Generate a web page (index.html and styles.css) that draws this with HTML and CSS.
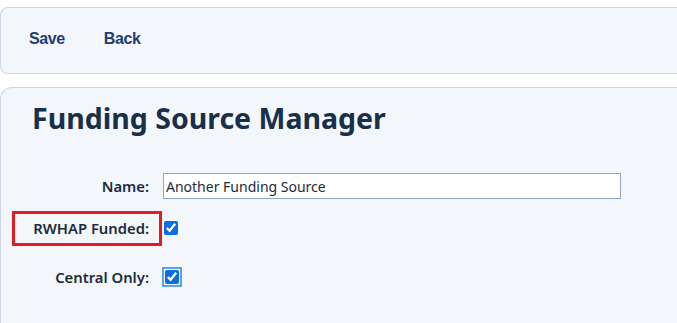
FILE: index.html
```html
<!DOCTYPE html>
<html lang="en">
<head>
    <meta charset="UTF-8">
    <title>Funding Source Manager</title>
    <link rel="stylesheet" href="styles.css">
</head>
<body>
    <div class="toolbar">
        <a class="tool-link" href="#">Save</a>
        <a class="tool-link" href="#">Back</a>
    </div>

    <div class="panel">
        <h1 class="title">Funding Source Manager</h1>

        <div class="form">
            <div class="form-row">
                <label class="form-label" for="name">Name:</label>
                <input class="text-input" type="text" id="name" value="Another Funding Source">
            </div>
            <div class="form-row">
                <label class="form-label highlight" for="rwhap">RWHAP Funded:</label>
                <input class="check" type="checkbox" id="rwhap" checked>
            </div>
            <div class="form-row last">
                <label class="form-label" for="central">Central Only:</label>
                <input class="check focused" type="checkbox" id="central" checked>
            </div>
        </div>
    </div>
</body>
</html>
```

FILE: styles.css
```css
* {
    margin: 0;
    padding: 0;
    box-sizing: border-box;
}

body {
    font-family: 'Noto Sans', 'Open Sans', sans-serif;
    background-color: #ffffff;
    overflow: hidden;
}

.toolbar {
    display: flex;
    align-items: center;
    gap: 39px;
    margin-top: 7px;
    height: 67px;
    padding: 0 0 4px 28px;
    background-color: #f3f6fb;
    border: 1px solid #cdd6e3;
    border-right: none;
    border-radius: 8px 0 0 8px;
}

.tool-link {
    font-family: 'Liberation Sans', Arial, sans-serif;
    font-weight: bold;
    font-size: 16px;
    letter-spacing: -0.4px;
    color: #1f3d75;
    text-decoration: none;
}

.panel {
    margin-top: 13px;
    height: 236px;
    padding: 11px 0 0 31px;
    background-color: #f3f6fb;
    border: 1px solid #cdd6e3;
    border-right: none;
    border-bottom: none;
    border-radius: 12px 0 0 0;
}

.title {
    font-size: 28.5px;
    font-weight: 700;
    color: #18304a;
}

.form {
    display: flex;
    flex-direction: column;
    margin: 31px 0 0 -20px;
}

.form-row {
    display: flex;
    align-items: center;
    gap: 1px;
    min-height: 36px;
    margin-bottom: 6px;
}

.form-row.last {
    margin-top: 7px;
}

.form-label {
    width: 150px;
    padding: 0 10px 0 0;
    text-align: right;
    font-size: 14.8px;
    font-weight: 600;
    color: #1c2b3b;
    border: 3px solid transparent;
    line-height: 29px;
}

.form-label.highlight {
    border-color: #e31b23;
}

.text-input {
    width: 458px;
    height: 26px;
    padding: 0 2px;
    border: 1px solid #8ea8c4;
    background: #ffffff;
    font-family: 'Noto Sans', 'Open Sans', sans-serif;
    font-size: 14px;
    color: #1c2b3b;
}

.check {
    width: 14px;
    height: 14px;
    margin-left: 1px;
    accent-color: #0b6de0;
}

.check.focused {
    margin-left: 2px;
    outline: 2px solid #5aa2e6;
    outline-offset: 1px;
}
```
